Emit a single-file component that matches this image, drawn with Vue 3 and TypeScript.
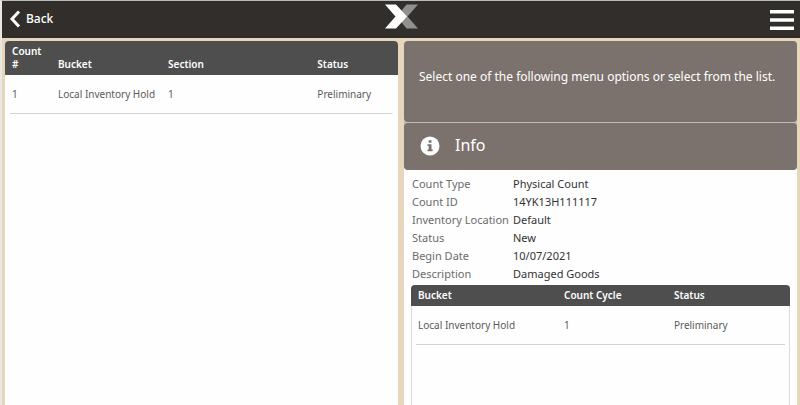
<script setup lang="ts">
interface CountLine {
  count: number
  bucket: string
  section: string
  status: string
}

interface BucketLine {
  bucket: string
  cycle: number
  status: string
}

interface Detail {
  label: string
  value: string
}

const counts: CountLine[] = [
  { count: 1, bucket: 'Local Inventory Hold', section: '1', status: 'Preliminary' },
]

const details: Detail[] = [
  { label: 'Count Type', value: 'Physical Count' },
  { label: 'Count ID', value: '14YK13H111117' },
  { label: 'Inventory Location', value: 'Default' },
  { label: 'Status', value: 'New' },
  { label: 'Begin Date', value: '10/07/2021' },
  { label: 'Description', value: 'Damaged Goods' },
]

const buckets: BucketLine[] = [
  { bucket: 'Local Inventory Hold', cycle: 1, status: 'Preliminary' },
]
</script>

<template>
  <div class="app">
    <header class="topbar">
      <button type="button" class="back">
        <svg class="chevron" viewBox="0 0 12 18" aria-hidden="true">
          <path d="M10 1.500 3 9l7 7.500" />
        </svg>
        <span>Back</span>
      </button>
      <svg class="logo" viewBox="0 0 33 25" aria-hidden="true">
        <path class="logo-back" d="M21.500 0.500H33L22.500 12.500 33 24.500H21.500L12 12.500Z" />
        <path class="logo-front" d="M0 0.500H11L22 12.500 11 24.500H0L10.500 12.500Z" />
      </svg>
      <button type="button" class="menu" aria-label="Menu">
        <svg viewBox="0 0 24 20" aria-hidden="true">
          <path d="M0 0h24v3.500H0zM0 8.200h24v3.500H0zM0 16.400h24v3.500H0z" />
        </svg>
      </button>
    </header>

    <main class="panes">
      <section class="pane list-pane">
        <table class="grid counts">
          <colgroup>
            <col class="c-number" />
            <col class="c-bucket" />
            <col class="c-section" />
            <col />
          </colgroup>
          <thead>
            <tr>
              <th scope="col">Count #</th>
              <th scope="col">Bucket</th>
              <th scope="col">Section</th>
              <th scope="col">Status</th>
            </tr>
          </thead>
          <tbody>
            <tr v-for="line in counts" :key="line.count">
              <td>{{ line.count }}</td>
              <td>{{ line.bucket }}</td>
              <td>{{ line.section }}</td>
              <td>{{ line.status }}</td>
            </tr>
          </tbody>
        </table>
      </section>

      <section class="pane info-pane">
        <div class="banner">
          <p class="prompt">Select one of the following menu options or select from the list.</p>
          <h2 class="info-title">
            <svg class="info-icon" viewBox="0 0 20 20" aria-hidden="true">
              <circle cx="10" cy="10" r="9.500" />
              <path d="M8.700 4.300h2.800v2.400H8.700zM7.500 8.200h4v5.400h1.200v1.700H7.500v-1.700h1.200V9.900H7.500z" />
            </svg>
            <span>Info</span>
          </h2>
        </div>
        <dl class="details">
          <template v-for="item in details" :key="item.label">
            <dt>{{ item.label }}</dt>
            <dd>{{ item.value }}</dd>
          </template>
        </dl>
        <div class="bucket-box">
          <table class="grid buckets">
            <colgroup>
              <col class="b-bucket" />
              <col class="b-cycle" />
              <col />
            </colgroup>
            <thead>
              <tr>
                <th scope="col">Bucket</th>
                <th scope="col">Count Cycle</th>
                <th scope="col">Status</th>
              </tr>
            </thead>
            <tbody>
              <tr v-for="line in buckets" :key="line.bucket">
                <td>{{ line.bucket }}</td>
                <td>{{ line.cycle }}</td>
                <td>{{ line.status }}</td>
              </tr>
            </tbody>
          </table>
        </div>
      </section>
    </main>
  </div>
</template>

<style>
body {
  margin: 0;
}
</style>

<style scoped>
.app {
  box-sizing: border-box;
  min-height: 100vh;
  display: flex;
  flex-direction: column;
  border-top: 1px solid #b9bdb8;
  border-left: 2px solid #e9e8e4;
  background: #e6d6bc;
  font-family: "Noto Sans", "Open Sans", sans-serif;
  color: #3c3c3c;
}

.topbar {
  display: grid;
  grid-template-columns: 1fr auto 1fr;
  align-items: center;
  height: 37px;
  padding: 0 6px 0 7px;
  background: #322e2b;
}

.back,
.menu {
  display: flex;
  align-items: center;
  padding: 0;
  border: 0;
  background: none;
  color: #fff;
  font: inherit;
  cursor: pointer;
}

.back {
  justify-self: start;
  gap: 5px;
  padding-bottom: 2px;
  font-size: 12px;
  font-weight: 500;
  line-height: 18px;
}

.chevron {
  width: 12px;
  height: 18px;
  fill: none;
  stroke: #fff;
  stroke-width: 3;
}

.logo {
  width: 33px;
  height: 25px;
  margin-bottom: 6px;
}

.logo-back {
  fill: #92908f;
}

.logo-front {
  fill: #fff;
}

.menu {
  justify-self: end;
}

.menu svg {
  width: 24px;
  height: 20px;
  fill: #fff;
}

.panes {
  flex: 1;
  display: grid;
  grid-template-columns: 1fr 1fr;
  gap: 6px;
  padding: 3px 3px 0;
}

.pane {
  min-width: 0;
  border-radius: 4px 4px 0 0;
  background: #fefefe;
}

.grid {
  width: 100%;
  table-layout: fixed;
  border-spacing: 0;
  font-size: 10px;
  line-height: 13px;
  text-align: left;
}

.grid th {
  padding: 4px 7px;
  background: #4e4e4f;
  color: #fff;
  font-weight: 600;
  vertical-align: bottom;
}

.grid th:first-child {
  border-top-left-radius: 4px;
}

.grid th:last-child {
  border-top-right-radius: 4px;
}

.grid td {
  padding: 13px 0 13px 7px;
  color: #5a5a5a;
  white-space: nowrap;
}

.grid tbody tr {
  background: linear-gradient(#d4d4d4, #d4d4d4) no-repeat 50% 100% / calc(100% - 10px) 1px;
}

.c-number {
  width: 46px;
}

.c-bucket {
  width: 28%;
}

.c-section {
  width: 38%;
}

.info-pane {
  display: flex;
  flex-direction: column;
}

.banner {
  border-radius: 4px;
  background: #c4bab0;
}

.prompt,
.info-title {
  box-sizing: border-box;
  display: flex;
  margin: 0;
  border-radius: 4px;
  background: #7c726d;
  color: #fff;
}

.prompt {
  height: 81px;
  padding: 27px 15px 0;
  font-size: 12px;
  line-height: 18px;
}

.info-title {
  align-items: center;
  gap: 15px;
  height: 47px;
  margin-top: 1px;
  padding: 0 16px 2px;
  font-size: 16px;
  font-weight: 400;
  line-height: 24px;
}

.info-title span {
  padding-bottom: 2px;
}

.info-icon {
  width: 20px;
  height: 20px;
}

.info-icon circle {
  fill: #fff;
}

.info-icon path {
  fill: #7c726d;
}

.details {
  display: grid;
  grid-template-columns: 101px 1fr;
  margin: 5px 8px 2px;
  font-size: 11px;
  line-height: 18px;
}

.details dt {
  color: #6b6b6b;
  white-space: nowrap;
}

.details dd {
  margin: 0;
  color: #333;
}

.bucket-box {
  flex: 1;
  margin: 0 7px;
  border-radius: 4px 4px 0 0;
  box-shadow: inset 1px 0 #dcdcdc, inset -1px 0 #dcdcdc;
}

.b-bucket {
  width: 146px;
}

.b-cycle {
  width: 29%;
}
</style>
